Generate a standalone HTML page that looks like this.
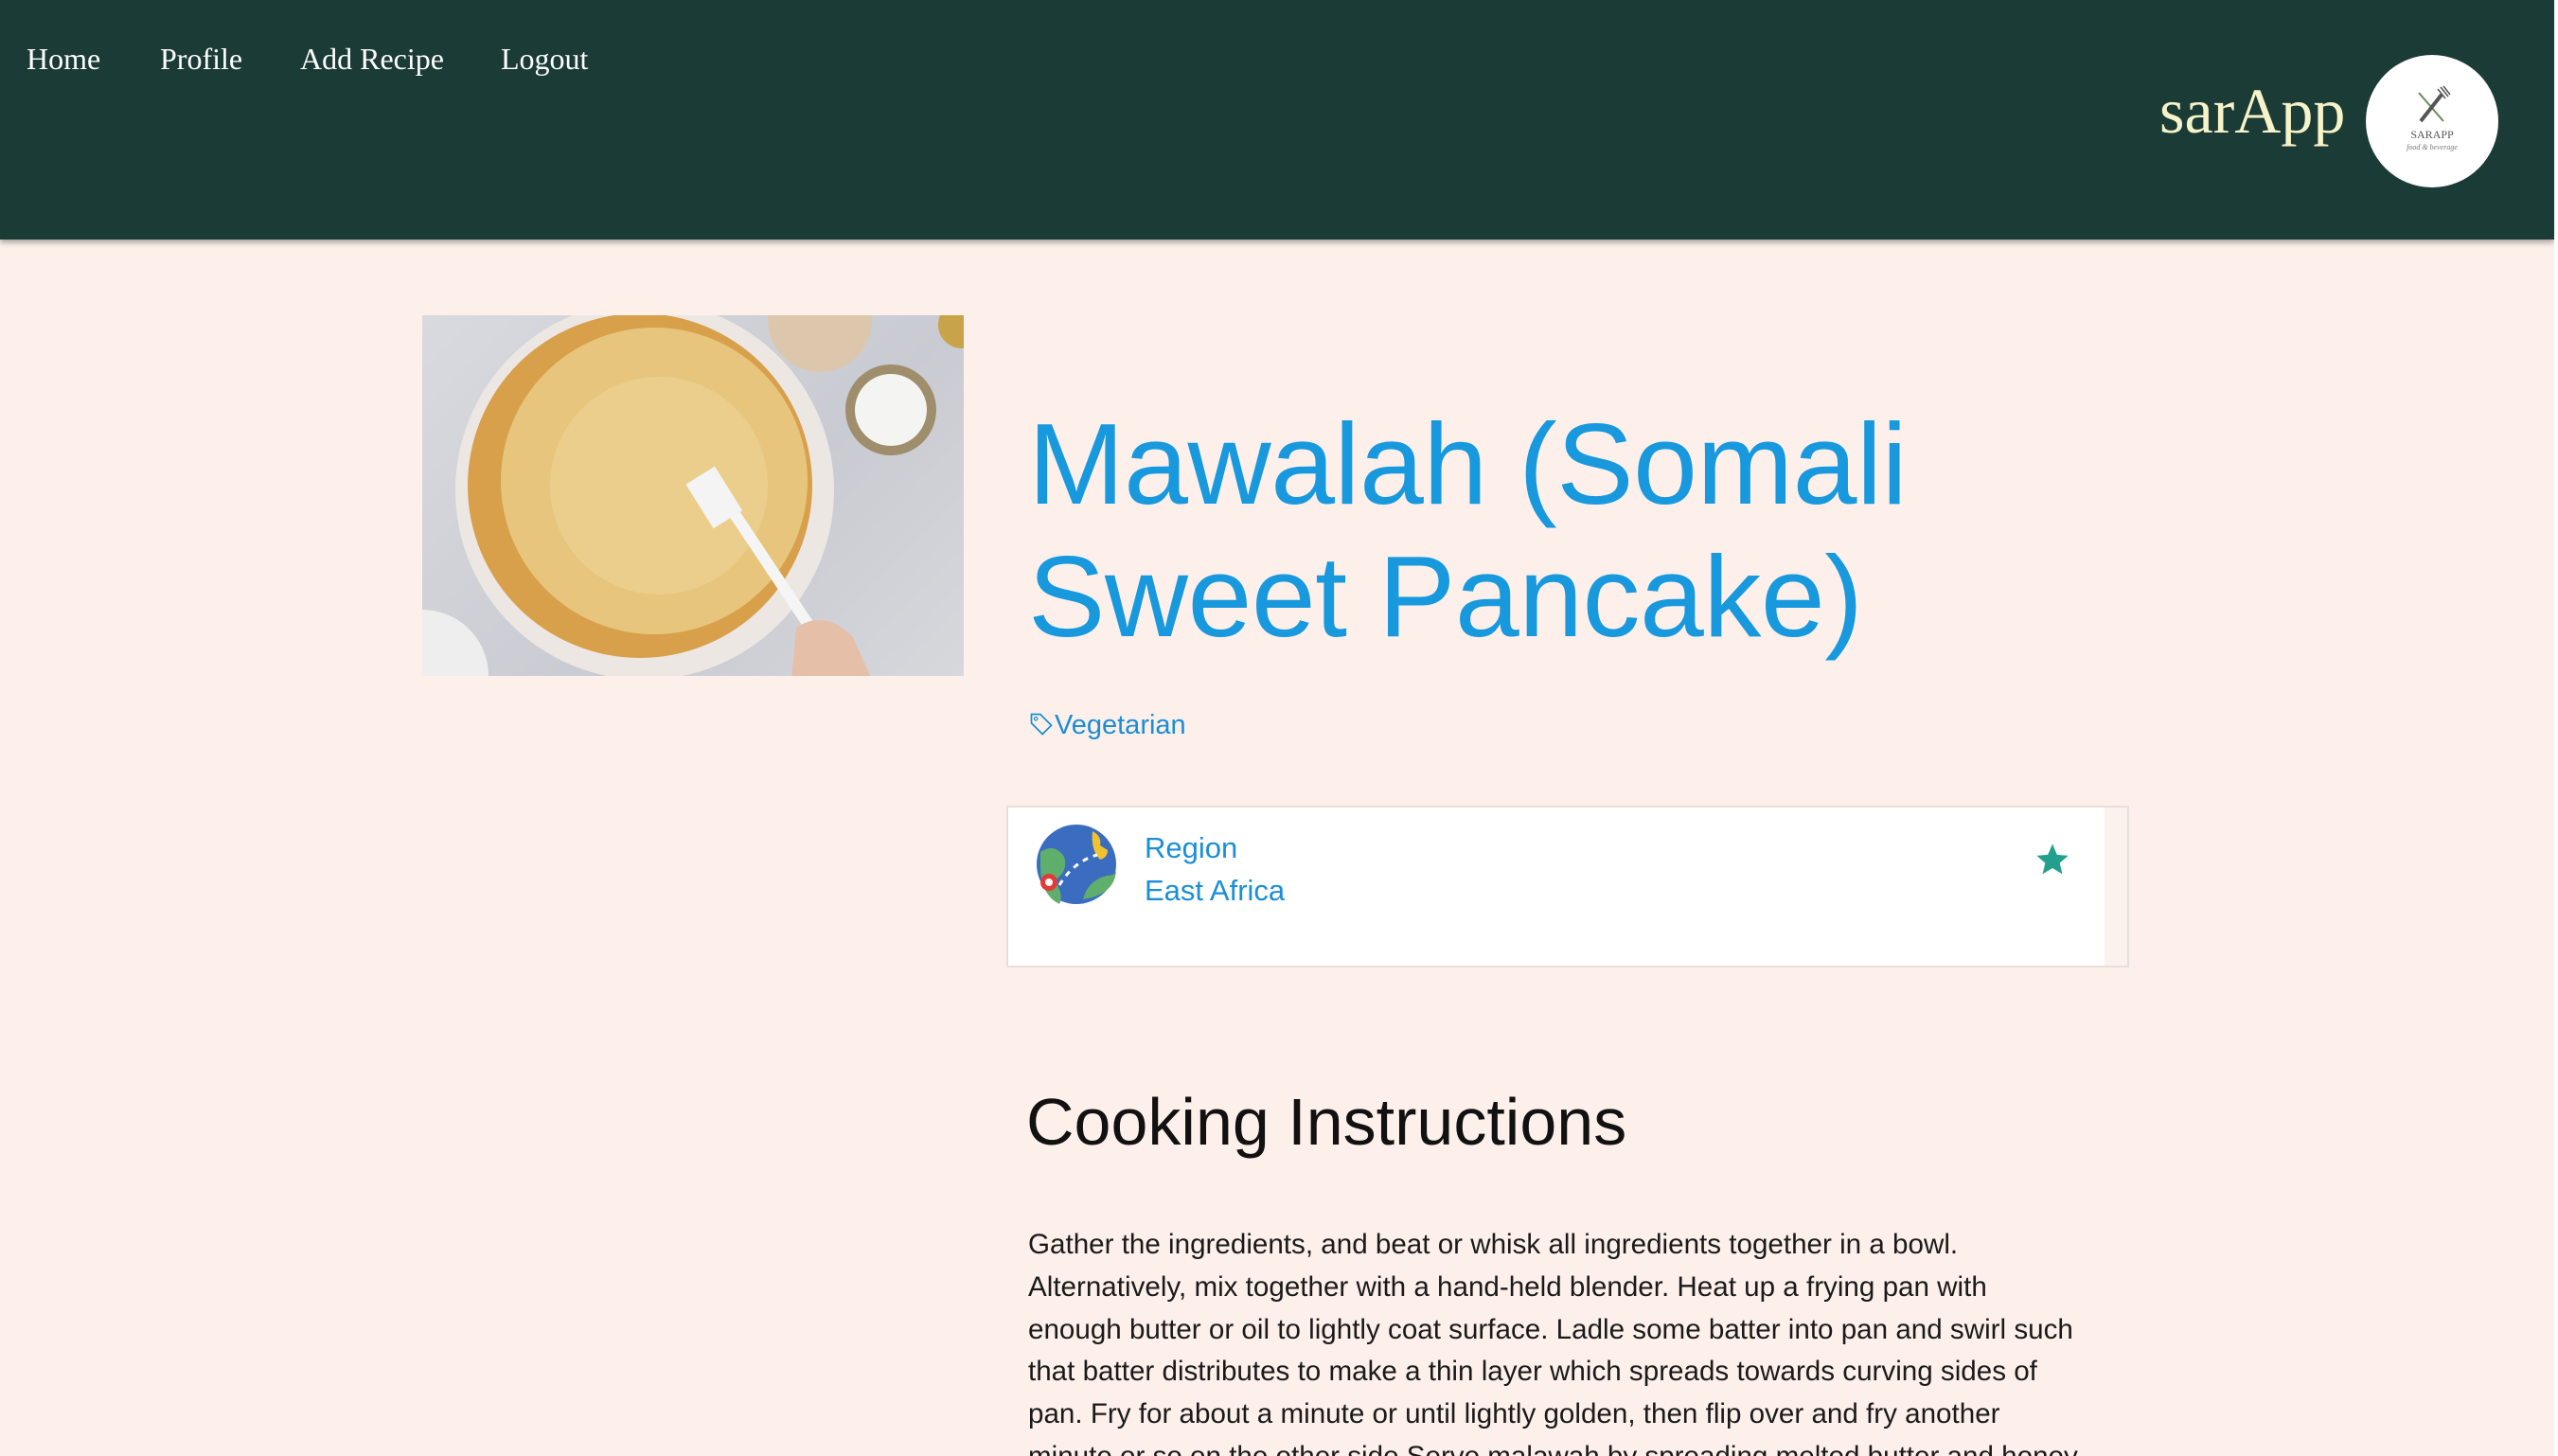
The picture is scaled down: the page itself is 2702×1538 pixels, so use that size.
<!DOCTYPE html>
<html><head><meta charset="utf-8"><style>
*{margin:0;padding:0;box-sizing:border-box}
html,body{width:2702px;height:1538px;overflow:hidden;background:#fdf0eb;font-family:"Liberation Sans",sans-serif;position:relative}
.hdr{position:absolute;left:0;top:0;width:2698px;height:253px;background:#1b3b36;box-shadow:0 3px 6px rgba(0,0,0,.35)}
.nav{position:absolute;top:44px;font-family:"Liberation Serif",serif;font-size:32px;color:#fff}
.brand{position:absolute;left:2281px;top:78px;font-family:"Liberation Serif",serif;font-size:68px;color:#f7f3c9}
.logo{position:absolute;left:2499px;top:58px;width:140px;height:140px;border-radius:50%;background:#fff}
.sb{position:absolute;left:2698px;top:0;width:4px;height:1538px;background:#fff}
.img{position:absolute;left:446px;top:333px;width:572px;height:381px;overflow:hidden;background:linear-gradient(135deg,#d9dadf,#c9cbd2 60%,#d7d8dc)}
.title{position:absolute;left:1086px;top:420px;font-size:122px;line-height:140px;color:#1899de;letter-spacing:-0.5px}
.tag{position:absolute;left:1086px;top:750px;font-size:29px;color:#1a8ed6}
.card{position:absolute;left:1063px;top:851px;width:1186px;height:171px;background:#fbf1ed;border:2px solid #e6dfdc}
.card div{position:absolute;left:0;top:0;width:1158px;height:167px;background:#fff}
.r{position:absolute;left:1209px;font-size:31px;color:#1a8ed6}
.h2{position:absolute;left:1084px;top:1145px;font-size:70px;color:#111}
.p{position:absolute;left:1086px;top:1293px;font-size:29.6px;line-height:44.8px;color:#1a1a1a;white-space:nowrap}
</style></head><body>
<div class="hdr"></div>
<div class="nav" style="left:28px">Home</div>
<div class="nav" style="left:169px">Profile</div>
<div class="nav" style="left:317px">Add Recipe</div>
<div class="nav" style="left:529px">Logout</div>
<div class="brand">sarApp</div>
<div class="logo"><svg width="140" height="140" viewBox="0 0 140 140">
<line x1="56" y1="40" x2="82" y2="70" stroke="#6d8a5a" stroke-width="2"/>
<line x1="58" y1="70" x2="80" y2="42" stroke="#555" stroke-width="4"/>
<path d="M76 36 l8 10 M79 34 l8 10 M82 33 l7 9" stroke="#555" stroke-width="1.5"/>
<text x="70" y="88" font-family="Liberation Serif" font-size="12" fill="#555" text-anchor="middle">SARAPP</text>
<text x="70" y="100" font-family="Liberation Serif" font-style="italic" font-size="8" fill="#777" text-anchor="middle">food &amp; beverage</text></svg></div>
<div class="sb"></div>
<div class="img"><svg width="572" height="381" viewBox="0 0 572 381">
<circle cx="235" cy="185" r="200" fill="#ece7e2"/>
<circle cx="230" cy="180" r="182" fill="#d8a04a"/>
<circle cx="245" cy="175" r="162" fill="#e7c57d"/>
<circle cx="250" cy="180" r="115" fill="#ecd08e" opacity=".8"/>
<circle cx="420" cy="5" r="55" fill="#dcc7ad"/>
<circle cx="495" cy="100" r="48" fill="#9f8e6c"/>
<circle cx="495" cy="100" r="38" fill="#f4f4f2"/>
<circle cx="570" cy="10" r="25" fill="#c9a34a"/>
<circle cx="0" cy="381" r="70" fill="#eee"/>
<line x1="330" y1="210" x2="410" y2="330" stroke="#f5f5f5" stroke-width="12" stroke-linecap="round"/>
<rect x="290" y="165" width="36" height="55" fill="#f4f4f4" transform="rotate(-32 308 192)"/>
<path d="M395 330 q30 -20 60 10 l20 45 h-85z" fill="#e6bfa8"/>
</svg></div>
<div class="title">Mawalah (Somali<br>Sweet Pancake)</div>
<div class="tag"><svg width="28" height="28" viewBox="0 0 24 24" style="vertical-align:-4px"><path d="M3 3h8l10 10-8 8L3 11z" fill="none" stroke="#1a8ed6" stroke-width="1.5"/><circle cx="7" cy="7" r="1.5" fill="none" stroke="#1a8ed6"/></svg>Vegetarian</div>
<div class="card"><div></div></div>
<svg style="position:absolute;left:1094px;top:870px" width="86" height="86" viewBox="0 0 86 86">
<circle cx="43" cy="43" r="42" fill="#3a6dbf"/>
<path d="M5 30 q15 -10 25 5 q5 15 -10 25 q10 15 5 25 q-20 -10 -20 -40z" fill="#5fae6b"/>
<path d="M50 80 q5 -20 25 -25 q8 0 10 -5 q-2 25 -35 30z" fill="#5fae6b"/>
<path d="M60 8 q10 5 8 15 l8 5 q0 8 -8 10 q-10 -10 -8 -30z" fill="#f2c12e"/>
<circle cx="14" cy="62" r="9" fill="#e23a34"/><circle cx="14" cy="62" r="4" fill="#fff"/>
<path d="M25 65 q15 -25 40 -32" stroke="#fff" stroke-width="3" stroke-dasharray="6 6" fill="none"/>
</svg>
<div class="r" style="top:878px">Region</div>
<div class="r" style="top:923px">East Africa</div>
<svg style="position:absolute;left:2148px;top:888px" width="40" height="40" viewBox="0 0 24 24"><path d="M12 2l2.9 6.9 7.1.6-5.4 4.7 1.7 7-6.3-3.8-6.3 3.8 1.7-7L2 9.5l7.1-.6z" fill="#22a08d"/></svg>
<div class="h2">Cooking Instructions</div>
<div class="p">Gather the ingredients, and beat or whisk all ingredients together in a bowl.<br>Alternatively, mix together with a hand-held blender. Heat up a frying pan with<br>enough butter or oil to lightly coat surface. Ladle some batter into pan and swirl such<br>that batter distributes to make a thin layer which spreads towards curving sides of<br>pan. Fry for about a minute or until lightly golden, then flip over and fry another<br>minute or so on the other side.Serve malawah by spreading melted butter and honey</div>
</body></html>
